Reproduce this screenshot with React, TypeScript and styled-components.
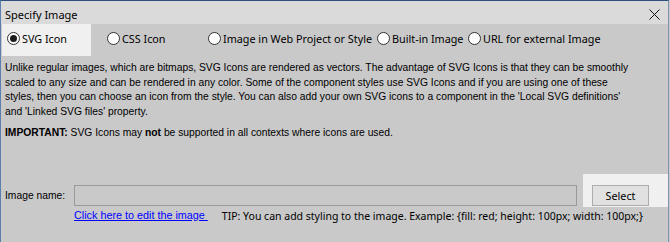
import styled, { createGlobalStyle } from "styled-components";

const GlobalStyle = createGlobalStyle`
  html, body {
    margin: 0;
    padding: 0;
    background: #c9c9c9;
  }
  body {
    width: 670px;
    height: 242px;
    overflow: hidden;
  }
`;

interface OptionProps {
  $w?: number;
  $active?: boolean;
}

const options = [
  { label: "SVG Icon", w: 89, active: true },
  { label: "CSS Icon", w: 90 },
  { label: "Image in Web Project or Style", w: 158 },
  { label: "Built-in Image", w: 80 },
  { label: "URL for external Image" },
];

const lines = [
  "Unlike regular images, which are bitmaps, SVG Icons are rendered as vectors. The advantage of SVG Icons is that they can be smoothly",
  "scaled to any size and can be rendered in any color. Some of the component styles use SVG Icons and if you are using one of these",
  "styles, then you can choose an icon from the style. You can also add your own SVG icons to a component in the 'Local SVG definitions'",
  "and 'Linked SVG files' property.",
];

function App() {
  return (
    <>
      <GlobalStyle />
      <Window>
        <TitleBar>
          <Title>Specify Image</Title>
          <Close viewBox="0 0 11 11">
            <path d="M0.5 0.5 L10.5 10.5 M10.5 0.5 L0.5 10.5" stroke="#111" strokeWidth="1" fill="none" />
          </Close>
        </TitleBar>
        <RadioRow>
          {options.map((o) => (
            <RadioOption key={o.label} $w={o.w} $active={o.active}>
              <RadioCircle $active={o.active} />
              {o.label}
            </RadioOption>
          ))}
        </RadioRow>
        <Description>
          {lines.map((l) => (
            <Line key={l}>{l}</Line>
          ))}
        </Description>
        <Important>
          <b>IMPORTANT:</b> SVG Icons may <b>not</b> be supported in all contexts where icons are used.
        </Important>
        <NameRow>
          <NameLabel>Image name:</NameLabel>
          <NameInput />
          <ButtonArea>
            <SelectButton>Select</SelectButton>
          </ButtonArea>
        </NameRow>
        <LinkRow>
          <EditLink href="#">Click here to edit the image </EditLink>
          <Tip>TIP: You can add styling to the image. Example: {"{fill: red; height: 100px; width: 100px;}"}</Tip>
        </LinkRow>
      </Window>
    </>
  );
}
export default App;

const Window = styled.div`
  width: 669px;
  height: 242px;
  box-sizing: border-box;
  border-top: 1px solid #2b4f7e;
  border-left: 1px solid #5b7fae;
  border-right: 1px solid #7f93ad;
  background: #c9c9c9;
  display: flex;
  flex-direction: column;
  font-family: Tahoma, "Liberation Sans", sans-serif;
  font-size: 10.3px;
  color: #000;
`;

const TitleBar = styled.div`
  height: 23px;
  background: #dadada;
  display: flex;
  align-items: center;
  justify-content: space-between;
  padding: 0 8px 0 4px;
  font-family: "Segoe UI", "Noto Sans", sans-serif;
  font-size: 11px;
`;

const Title = styled.span`
  margin-top: 4px;
`;

const Close = styled.svg`
  width: 11px;
  height: 11px;
  margin-top: 3px;
`;

const RadioRow = styled.div`
  display: flex;
  gap: 11px;
  padding-left: 1px;
  height: 32px;
  font-family: "Segoe UI", "Noto Sans", sans-serif;
  font-size: 10.8px;
`;

const RadioOption = styled.label<OptionProps>`
  display: flex;
  align-items: center;
  gap: 2px;
  padding: 0 0 3px 5px;
  width: ${(p) => (p.$w ? `${p.$w}px` : "auto")};
  box-sizing: border-box;
  background: ${(p) => (p.$active ? "#f0f0f0" : "transparent")};
  white-space: nowrap;
`;

const RadioCircle = styled.span<OptionProps>`
  width: 11px;
  height: 11px;
  border: 1px solid #333;
  border-radius: 50%;
  background: #fff;
  display: inline-flex;
  align-items: center;
  justify-content: center;
  flex-shrink: 0;
  &::after {
    content: "";
    display: ${(p) => (p.$active ? "block" : "none")};
    width: 7px;
    height: 7px;
    border-radius: 50%;
    background: #1a1a1a;
  }
`;

const Description = styled.div`
  margin: 5px 0 0;
  padding: 0 4px;
  line-height: 14.5px;
`;

const Line = styled.div`
  white-space: nowrap;
`;

const Important = styled.p`
  margin: 7px 0 0;
  padding: 0 4px;
  line-height: 14.5px;
  white-space: nowrap;
`;

const NameRow = styled.div`
  display: flex;
  align-items: flex-end;
  margin-top: 33px;
  padding-left: 4px;
`;

const NameLabel = styled.span`
  width: 69px;
  margin-bottom: 5px;
`;

const NameInput = styled.div`
  width: 503px;
  height: 21px;
  box-sizing: border-box;
  border: 1px solid #9a9a9a;
`;

const ButtonArea = styled.div`
  margin-left: 6px;
  flex: 1;
  background: #f0f0f0;
  padding: 11px 0 1px 9px;
  margin-bottom: -1px;
`;

const SelectButton = styled.div`
  width: 57px;
  height: 21px;
  box-sizing: border-box;
  border: 1px solid #adadad;
  background: #e1e1e1;
  display: flex;
  align-items: center;
  justify-content: center;
  font-family: "Segoe UI", "Noto Sans", sans-serif;
  font-size: 10.8px;
`;

const LinkRow = styled.div`
  display: flex;
  gap: 14px;
  padding-left: 73px;
  margin-top: 3px;
  white-space: pre;
  font-size: 10.8px;
`;

const EditLink = styled.a`
  color: #0000ff;
  text-decoration: underline;
`;

const Tip = styled.span`
  font-family: "Segoe UI", "Noto Sans", sans-serif;
  font-size: 10.5px;
`;
